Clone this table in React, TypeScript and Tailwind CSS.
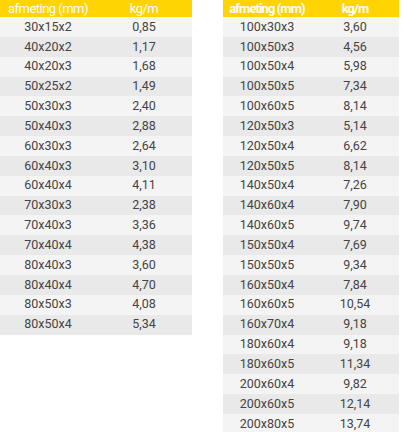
const left: [string, string][] = [
  ['30x15x2', '0,85'],
  ['40x20x2', '1,17'],
  ['40x20x3', '1,68'],
  ['50x25x2', '1,49'],
  ['50x30x3', '2,40'],
  ['50x40x3', '2,88'],
  ['60x30x3', '2,64'],
  ['60x40x3', '3,10'],
  ['60x40x4', '4,11'],
  ['70x30x3', '2,38'],
  ['70x40x3', '3,36'],
  ['70x40x4', '4,38'],
  ['80x40x3', '3,60'],
  ['80x40x4', '4,70'],
  ['80x50x3', '4,08'],
  ['80x50x4', '5,34'],
]

const right: [string, string][] = [
  ['100x30x3', '3,60'],
  ['100x50x3', '4,56'],
  ['100x50x4', '5,98'],
  ['100x50x5', '7,34'],
  ['100x60x5', '8,14'],
  ['120x50x3', '5,14'],
  ['120x50x4', '6,62'],
  ['120x50x5', '8,14'],
  ['140x50x4', '7,26'],
  ['140x60x4', '7,90'],
  ['140x60x5', '9,74'],
  ['150x50x4', '7,69'],
  ['150x50x5', '9,34'],
  ['160x50x4', '7,84'],
  ['160x60x5', '10,54'],
  ['160x70x4', '9,18'],
  ['180x60x4', '9,18'],
  ['180x60x5', '11,34'],
  ['200x60x4', '9,82'],
  ['200x60x5', '12,14'],
  ['200x80x5', '13,74'],
]

function SizeTable({ rows, bold, width }: { rows: [string, string][]; bold?: boolean; width: string }) {
  return (
    <div className={width}>
      <div
        className={`grid grid-cols-2 h-[17px] items-center bg-[#ffd400] text-white text-[13px] leading-none text-center ${
          bold ? 'font-bold tracking-[-0.07em]' : 'tracking-[-0.04em]'
        }`}
      >
        <span>afmeting (mm)</span>
        <span>kg/m</span>
      </div>
      {rows.map(([size, kg], i) => (
        <div
          key={size}
          className={`grid grid-cols-2 h-[19.85px] items-center text-center text-[12.5px] leading-none text-[#444] ${
            i % 2 === 0 ? 'bg-[#f4f4f4]' : 'bg-[#e9e9e9]'
          }`}
        >
          <span>{size}</span>
          <span>{kg}</span>
        </div>
      ))}
    </div>
  )
}

export default function App() {
  return (
    <div className="flex items-start w-[403px] h-[432px] overflow-hidden bg-white font-['Roboto',sans-serif]">
      <SizeTable rows={left} width="w-[192px]" />
      <div className="ml-[31px]">
        <SizeTable rows={right} bold width="w-[176px]" />
      </div>
    </div>
  )
}
